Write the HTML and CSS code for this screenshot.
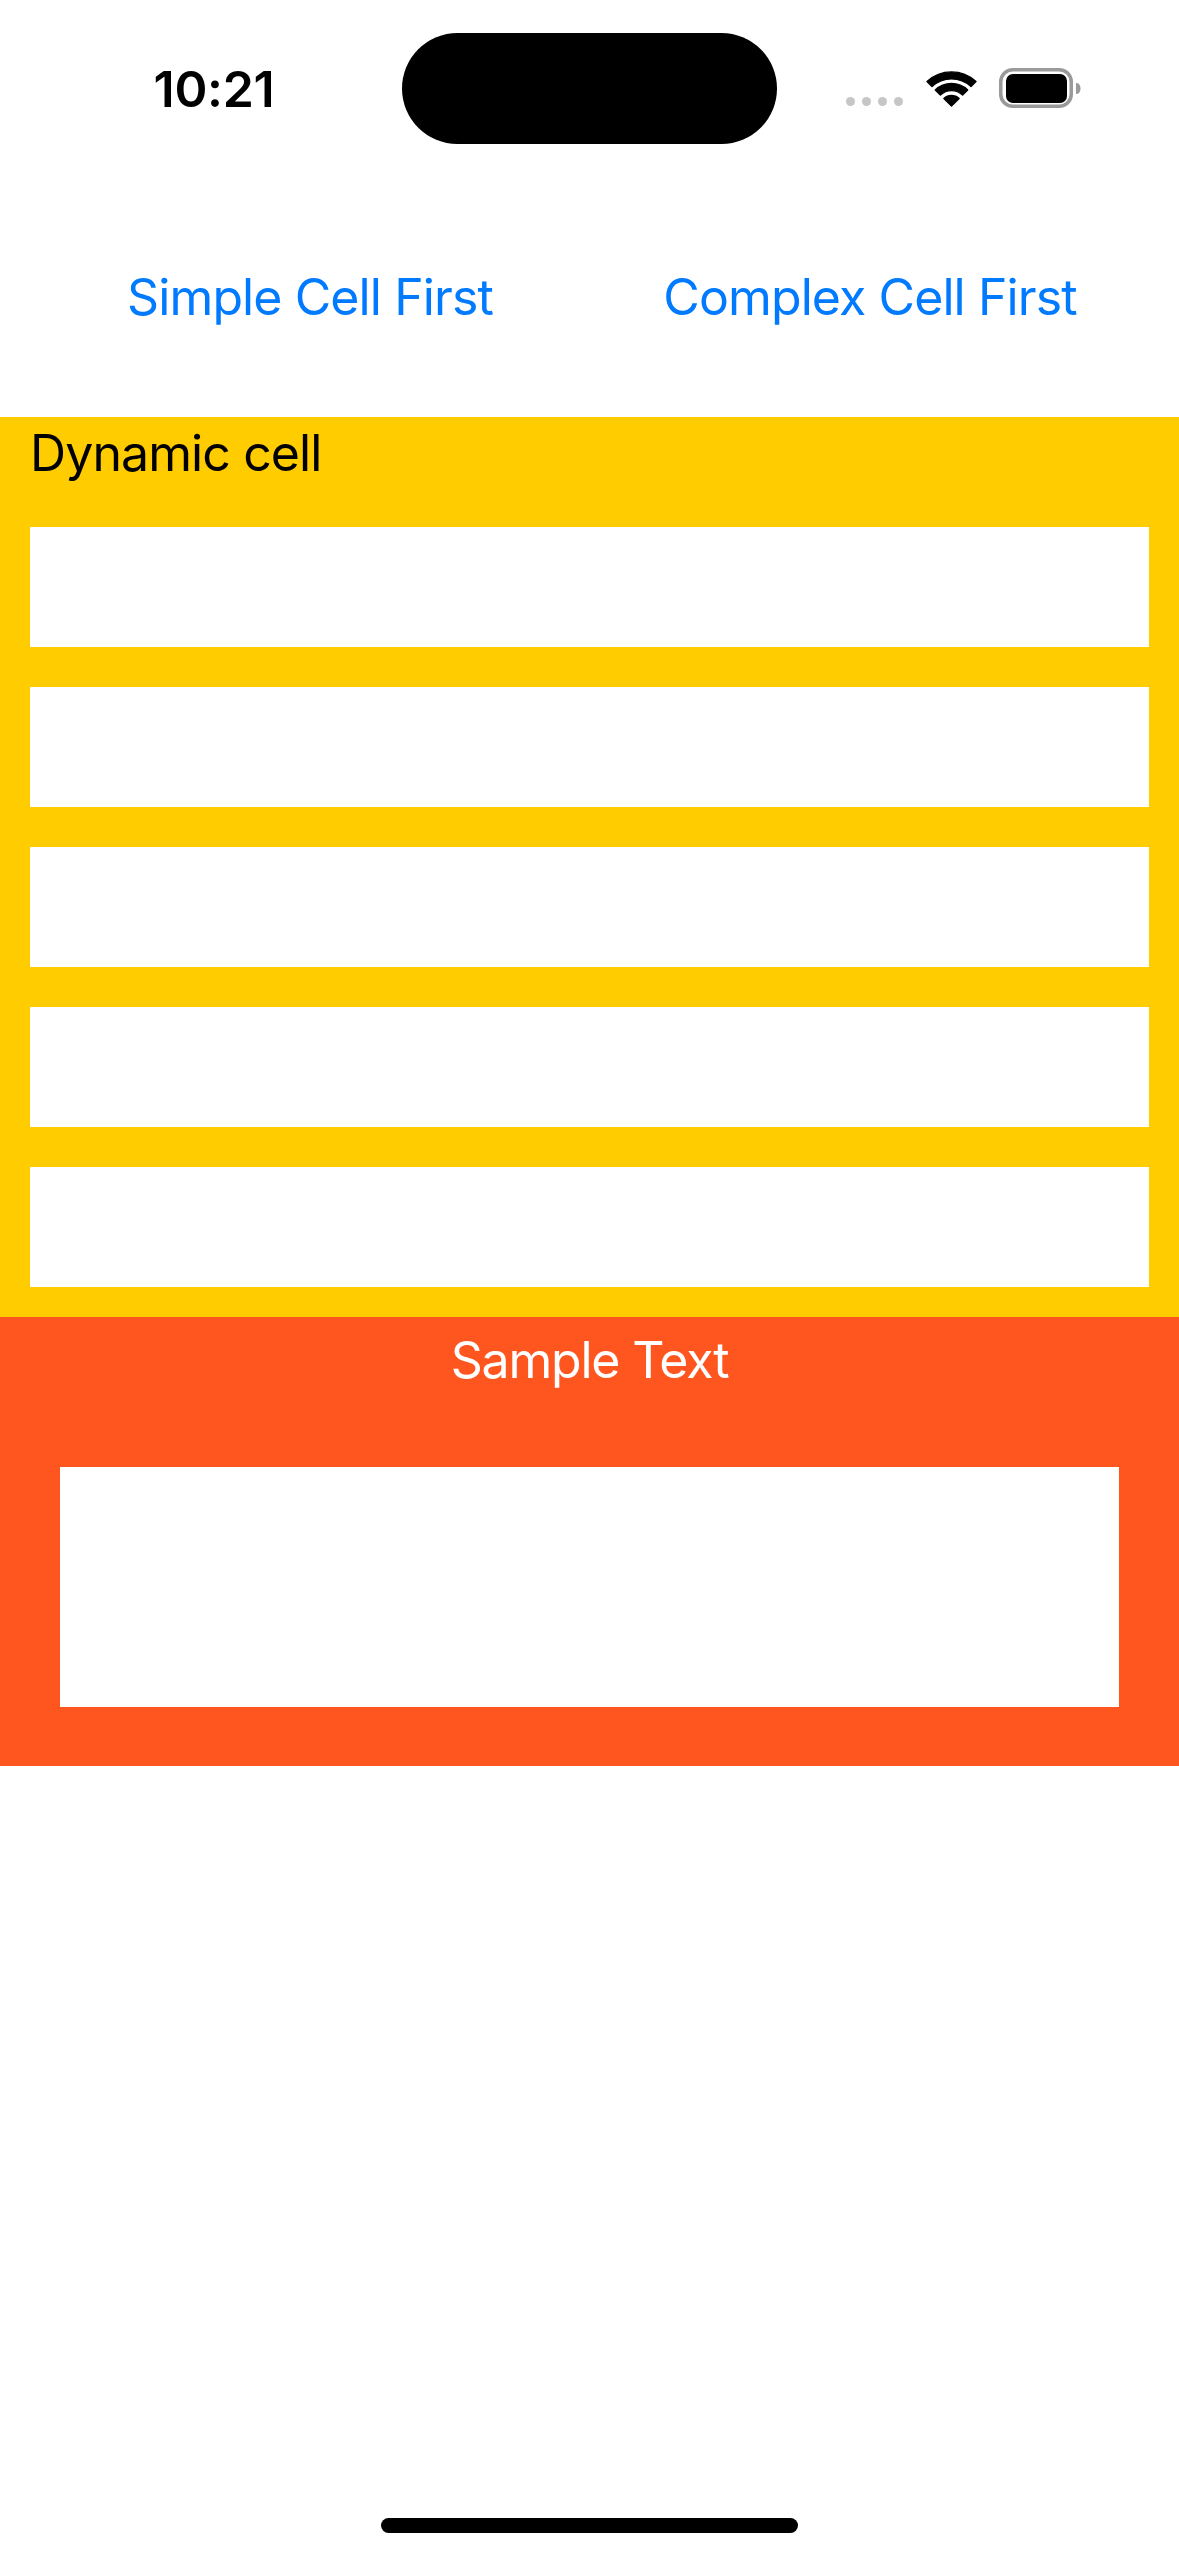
FILE: index.html
```html
<!DOCTYPE html>
<html lang="en">
<head>
<meta charset="utf-8">
<title>Dynamic cell</title>
<link rel="stylesheet" href="styles.css">
</head>
<body>
<div class="screen">
  <div class="status">
    <div class="time">10:21</div>
    <div class="island"></div>
    <div class="icons">
      <div class="dots"><span></span><span></span><span></span><span></span></div>
      <svg class="wifi" width="51" height="37" viewBox="0 0 51 37">
        <g fill="#000" stroke="#000" stroke-width="1.4" stroke-linejoin="round">
          <path d="M1 11.5 A36 36 0 0 1 50 11.5 L45 16.6 A28.5 28.5 0 0 0 6 16.6 Z"/>
          <path d="M9.3 20 A23.5 23.5 0 0 1 41.7 20 L36.6 25.1 A16 16 0 0 0 14.4 25.1 Z"/>
          <path d="M17.9 28.6 A11 11 0 0 1 33.1 28.6 L25.5 36 Z"/>
        </g>
      </svg>
      <svg class="battery" width="82" height="40" viewBox="0 0 82 40">
        <rect x="1.75" y="1.75" width="70.5" height="36.5" rx="12" fill="none" stroke="#9a9a9a" stroke-width="3.5"/>
        <rect x="7" y="6" width="61" height="29" rx="7" fill="#000"/>
        <path d="M77 15 C80 15 81.5 17 81.5 20.5 C81.5 24 80 26 77 26 Z" fill="#9a9a9a"/>
      </svg>
    </div>
  </div>

  <div class="actions">
    <div class="action">Simple Cell First</div>
    <div class="action">Complex Cell First</div>
  </div>

  <section class="dynamic">
    <div class="dynamic-title">Dynamic cell</div>
    <div class="rows">
      <div class="row"></div>
      <div class="row"></div>
      <div class="row"></div>
      <div class="row"></div>
      <div class="row"></div>
    </div>
  </section>

  <section class="sample">
    <div class="sample-title">Sample Text</div>
    <div class="sample-box"></div>
  </section>

  <div class="home-indicator"></div>
</div>
</body>
</html>
```

FILE: styles.css
```css
html, body {
  margin: 0;
  padding: 0;
  background: #ffffff;
}

.screen {
  position: relative;
  width: 1179px;
  height: 2556px;
  overflow: hidden;
  background: #ffffff;
  font-family: Inter, "Noto Sans", sans-serif;
  color: #000;
}

/* Status bar */
.status {
  display: flex;
  align-items: flex-start;
  height: 141px;
  padding-top: 33px;
  box-sizing: border-box;
}

.time {
  width: 402px;
  padding-left: 26px;
  box-sizing: border-box;
  text-align: center;
  margin-top: 26px;
  font-size: 50px;
  line-height: 60px;
  font-weight: 600;
  letter-spacing: -0.3px;
}

.island {
  width: 375px;
  height: 111px;
  border-radius: 56px;
  background: #000;
  flex: none;
}

.icons {
  display: flex;
  align-items: center;
  margin-left: 69px;
  margin-top: 35px;
  height: 40px;
}

.dots {
  display: flex;
  gap: 7px;
  align-self: flex-end;
  margin-bottom: 2px;
}

.dots span {
  width: 9px;
  height: 9px;
  border-radius: 50%;
  background: #c6c6c6;
}

.wifi {
  display: block;
  margin-left: 23px;
  margin-top: 1px;
}

.battery {
  display: block;
  margin-left: 22px;
}

/* Buttons */
.actions {
  display: grid;
  grid-template-columns: 480px 480px;
  column-gap: 80px;
  padding: 126px 0 0 70px;
  height: 276px;
  box-sizing: border-box;
}

.action {
  text-align: center;
  color: #007aff;
  font-size: 50px;
  line-height: 60px;
  letter-spacing: -0.9px;
  white-space: nowrap;
}

/* Dynamic cell section */
.dynamic {
  background: #ffcc00;
  height: 900px;
  box-sizing: border-box;
}

.dynamic-title {
  height: 110px;
  box-sizing: border-box;
  padding: 6px 0 0 30px;
  font-size: 50px;
  line-height: 60px;
  letter-spacing: -0.9px;
}

.rows {
  display: flex;
  flex-direction: column;
  gap: 40px;
  padding: 0 30px;
}

.row {
  height: 120px;
  background: #ffffff;
}

/* Sample section */
.sample {
  background: #ff551f;
  height: 449px;
  box-sizing: border-box;
  padding-top: 13px;
}

.sample-title {
  text-align: center;
  color: #ffffff;
  font-size: 50px;
  line-height: 60px;
  letter-spacing: -1.2px;
}

.sample-box {
  margin: 77px 60px 0 60px;
  height: 240px;
  background: #ffffff;
}

.home-indicator {
  position: absolute;
  left: 381px;
  top: 2518px;
  width: 417px;
  height: 15px;
  border-radius: 8px;
  background: #000;
}
```
